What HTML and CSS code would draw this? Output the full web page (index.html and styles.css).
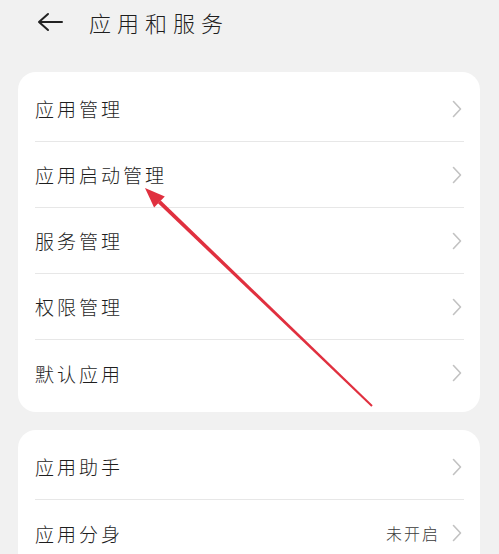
FILE: index.html
```html
<!DOCTYPE html>
<html>
<head>
  <meta charset="UTF-8">
  <meta name="viewport" content="width=device-width, initial-scale=1.0"/>
  <title>应用和服务</title>
  <link rel="stylesheet" href="styles.css">
</head>
<body>
  <div class="header">
    <svg class="back" width="26" height="20" viewBox="0 0 26 20">
      <path d="M11 2 L2 10 L11 18 M2 10 H25" fill="none" stroke="#222" stroke-width="2" stroke-linecap="round" stroke-linejoin="round"/>
    </svg>
    <div class="title">应用和服务</div>
  </div>

  <div class="main">
    <div class="card">
      <div class="row"><span class="label">应用管理</span><svg class="chev" width="10" height="18" viewBox="0 0 10 18"><path d="M1.5 1.5 L8.5 9 L1.5 16.5"/></svg></div>
      <div class="row"><span class="label">应用启动管理</span><svg class="chev" width="10" height="18" viewBox="0 0 10 18"><path d="M1.5 1.5 L8.5 9 L1.5 16.5"/></svg></div>
      <div class="row"><span class="label">服务管理</span><svg class="chev" width="10" height="18" viewBox="0 0 10 18"><path d="M1.5 1.5 L8.5 9 L1.5 16.5"/></svg></div>
      <div class="row"><span class="label">权限管理</span><svg class="chev" width="10" height="18" viewBox="0 0 10 18"><path d="M1.5 1.5 L8.5 9 L1.5 16.5"/></svg></div>
      <div class="row"><span class="label">默认应用</span><svg class="chev" width="10" height="18" viewBox="0 0 10 18"><path d="M1.5 1.5 L8.5 9 L1.5 16.5"/></svg></div>
    </div>

    <div class="card">
      <div class="row"><span class="label">应用助手</span><svg class="chev" width="10" height="18" viewBox="0 0 10 18"><path d="M1.5 1.5 L8.5 9 L1.5 16.5"/></svg></div>
      <div class="row"><span class="label">应用分身</span><span class="value">未开启</span><svg class="chev" width="10" height="18" viewBox="0 0 10 18"><path d="M1.5 1.5 L8.5 9 L1.5 16.5"/></svg></div>
    </div>
  </div>

  <!-- red pointer drawn over the list -->
  <svg class="pointer" width="499" height="554" viewBox="0 0 499 554">
    <polygon points="160.8,200.5 158.0,203.3 371.3,406.7 372.7,405.3" fill="#e0303f"/>
    <polygon points="145,188 164.8,196.4 154.1,207.4" fill="#e0303f"/>
  </svg>
</body>
</html>
```

FILE: styles.css
```css
body {
  margin: 0;
  font-family: "Noto Sans CJK SC", "Noto Sans", sans-serif;
  font-weight: 300;
  background: #f1f1f1;
  color: #1e1e1e;
  height: 554px;
  overflow: hidden;
  position: relative;
}
.header {
  height: 44px;
  display: flex;
  align-items: center;
  padding-left: 37px;
}
.back {
  flex: none;
}
.title {
  margin-left: 26px;
  font-size: 22px;
  letter-spacing: 6px;
}
.main {
  padding: 28px 19px 0 18px;
  display: flex;
  flex-direction: column;
  gap: 18px;
}
.card {
  background: white;
  border-radius: 18px;
  padding: 4px 16px 6px 17px;
}
.row {
  height: 66px;
  display: flex;
  align-items: center;
  border-bottom: 1px solid #e7e7e7;
  box-sizing: border-box;
}
.row:last-child {
  border-bottom: none;
}
.label {
  flex: 1;
  font-size: 19px;
  letter-spacing: 3px;
}
.value {
  font-size: 16px;
  letter-spacing: 2px;
  color: #3a3a3a;
  margin-right: 12px;
}
.chev {
  flex: none;
  margin-right: 2px;
}
.chev path {
  fill: none;
  stroke: #c2c2c2;
  stroke-width: 1.6;
  stroke-linecap: round;
  stroke-linejoin: round;
}
.pointer {
  position: absolute;
  top: 0;
  left: 0;
  pointer-events: none;
}
```
